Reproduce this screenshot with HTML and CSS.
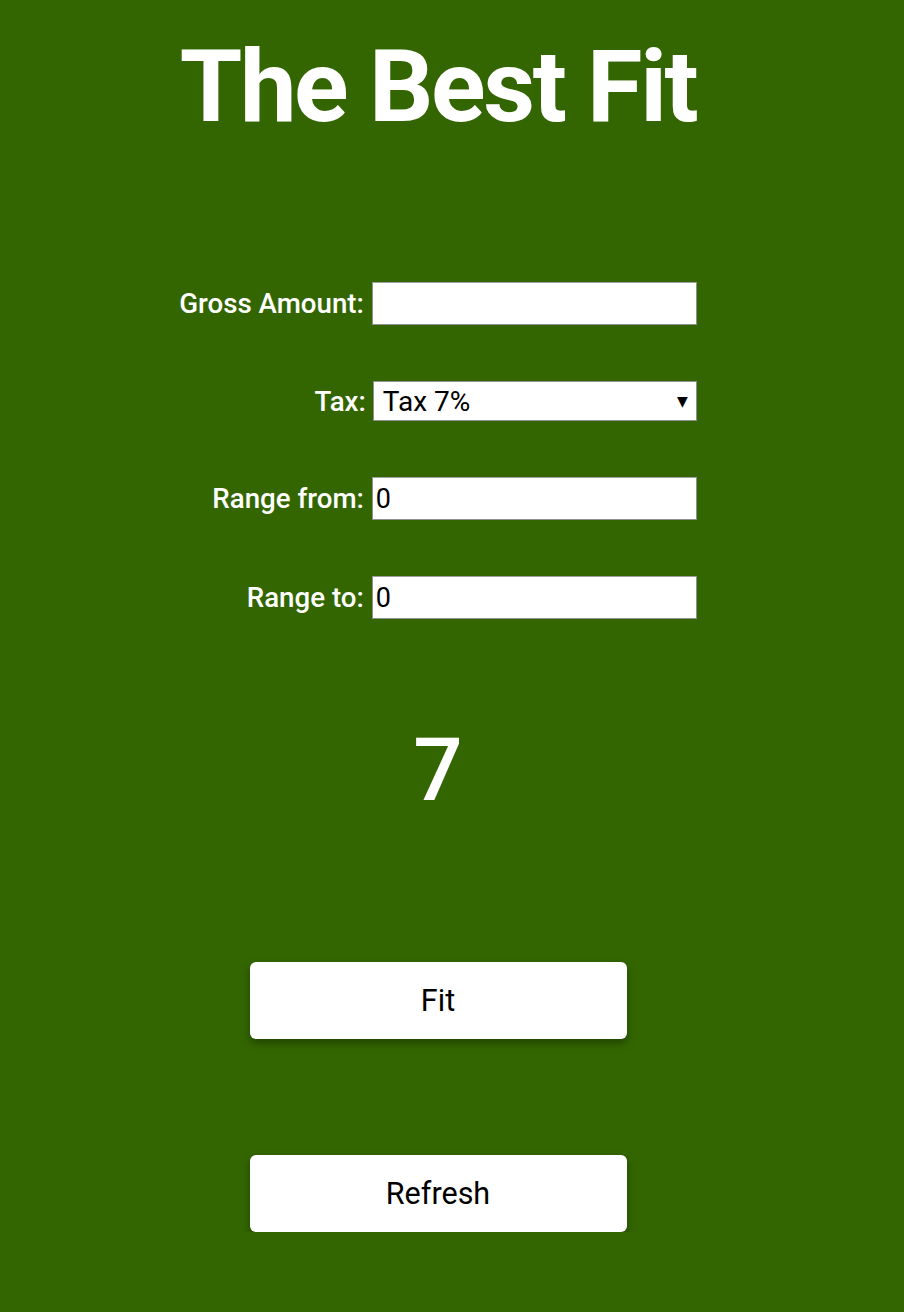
FILE: index.html
```html
<!DOCTYPE html>
<html lang="en">
<head>
<meta charset="utf-8">
<title>The Best Fit</title>
<link rel="stylesheet" href="styles.css">
</head>
<body>
<main class="page">
  <h1 class="title">The Best Fit</h1>
  <form class="form">
    <label class="label" for="gross">Gross Amount:</label>
    <input class="field" id="gross" type="text" value="">
    <label class="label label-tax" for="tax">Tax:</label>
    <div class="select">
      <span class="select-text">Tax 7%</span>
      <span class="select-arrow">&#9660;</span>
    </div>
    <label class="label" for="from">Range from:</label>
    <input class="field" id="from" type="text" value="0">
    <label class="label" for="to">Range to:</label>
    <input class="field" id="to" type="text" value="0">
  </form>
  <div class="result">7</div>
  <div class="actions">
    <button class="btn" type="button">Fit</button>
    <button class="btn" type="button">Refresh</button>
  </div>
</main>
</body>
</html>
```
FILE: styles.css
```css
html, body {
  margin: 0;
  padding: 0;
  background: #336600;
}
body {
  font-family: Roboto, "Liberation Sans", sans-serif;
  color: #ffffff;
}
.page {
  width: 876px;
  display: flex;
  flex-direction: column;
  align-items: center;
}
.title {
  margin: 28px 0 0;
  font-size: 101px;
  font-weight: 700;
  line-height: 117px;
  letter-spacing: -2.4px;
}
.form {
  margin-top: 137px;
  display: grid;
  grid-template-columns: auto 325px;
  column-gap: 8px;
  row-gap: 56px;
  align-items: center;
}
.label {
  justify-self: end;
  font-size: 27.7px;
  font-weight: 500;
}
.label-tax {
  margin-right: -2px;
}
.field {
  box-sizing: border-box;
  width: 325px;
  height: 43px;
  margin: 0;
  padding: 0 3px;
  border: 1px solid #8f8f8f;
  border-top-color: #a0a0a0;
  background: #ffffff;
  font-family: Roboto, "Liberation Sans", sans-serif;
  font-size: 27px;
  color: #000000;
  outline: none;
}
.select {
  box-sizing: border-box;
  width: 324px;
  height: 40px;
  justify-self: end;
  display: flex;
  align-items: center;
  justify-content: space-between;
  padding: 0 8px 0 9px;
  border: 1px solid #8f8f8f;
  background: #ffffff;
  color: #000000;
  font-size: 28px;
}
.select-arrow {
  font-size: 14px;
  font-family: "DejaVu Sans", sans-serif;
}
.result {
  margin-top: 100px;
  font-size: 87px;
  line-height: 102px;
  font-weight: 500;
}
.actions {
  margin-top: 141px;
  display: flex;
  flex-direction: column;
  gap: 116px;
}
.btn {
  width: 377px;
  height: 77px;
  border: none;
  border-radius: 6px;
  background: #ffffff;
  color: #000000;
  font-family: Roboto, "Liberation Sans", sans-serif;
  font-size: 30.5px;
  box-shadow: 0 4px 8px rgba(0, 0, 0, 0.35);
}
```
